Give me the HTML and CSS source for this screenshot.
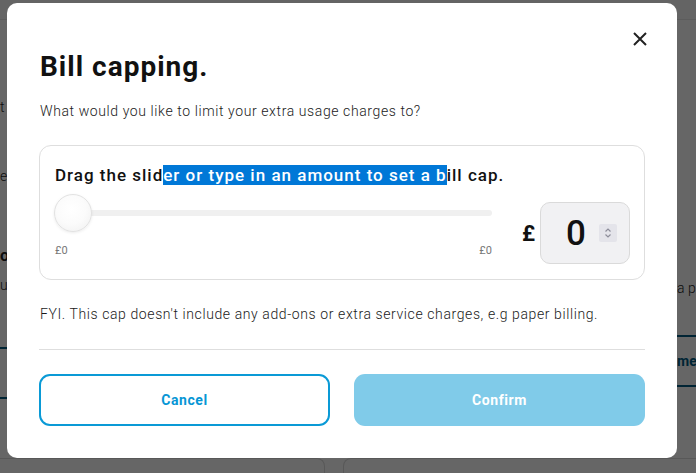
FILE: index.html
```html
<!DOCTYPE html>
<html lang="en">
<head>
<meta charset="utf-8">
<title>Bill capping</title>
<link rel="stylesheet" href="styles.css">
</head>
<body>
<div class="page">
  <div class="page-top"></div>
  <div class="page-row">
    <section class="pcol pcol-left">
      <p class="pline pl1">t</p>
      <p class="pline pl2">e</p>
      <p class="pline pl3 strong">ou</p>
      <p class="pline pl4">u</p>
      <div class="pbtn pbtn-left"></div>
    </section>
    <section class="pcol pcol-right">
      <p class="pline pr1">a p</p>
      <div class="pbtn pbtn-right"><span>me</span></div>
    </section>
  </div>
  <div class="page-row lower">
    <div class="lcard lcard-left"></div>
    <div class="lcard lcard-right"></div>
  </div>
</div>

<div class="overlay">
  <div class="modal" role="dialog" aria-labelledby="bc-title">
    <button class="close" aria-label="Close">
      <svg width="14" height="14" viewBox="0 0 14 14"><path d="M1 1 L13 13 M13 1 L1 13" stroke="#222" stroke-width="2" fill="none"/></svg>
    </button>
    <h1 id="bc-title" class="title">Bill capping.</h1>
    <p class="subtitle">What would you like to limit your extra usage charges to?</p>

    <div class="cap-card">
      <p class="cap-heading">Drag the slid<span class="sel">er or type in an amount to set a b</span>ill cap.</p>
      <div class="cap-row">
        <div class="slider-col">
          <div class="slider">
            <div class="track"></div>
            <div class="thumb"></div>
          </div>
          <div class="slider-labels"><span>£0</span><span>£0</span></div>
        </div>
        <div class="amount">
          <span class="pound">£</span>
          <div class="amount-box">
            <span class="amount-val">0</span>
            <span class="spin">
              <svg width="18" height="18" viewBox="0 0 18 18"><path d="M6.5 7.5 L9 5 L11.5 7.5 M6.5 10.5 L9 13 L11.5 10.5" stroke="#8d8d9a" stroke-width="1.2" fill="none"/></svg>
            </span>
          </div>
        </div>
      </div>
    </div>

    <p class="fyi">FYI. This cap doesn't include any add-ons or extra service charges, e.g paper billing.</p>
    <div class="divider"></div>
    <div class="actions">
      <button class="btn btn-cancel">Cancel</button>
      <button class="btn btn-confirm">Confirm</button>
    </div>
  </div>
</div>
</body>
</html>
```

FILE: styles.css
```css
* { box-sizing: border-box; }
html, body { margin: 0; padding: 0; }
body {
  width: 696px;
  height: 473px;
  overflow: hidden;
  background: #fff;
  font-family: Roboto, "Liberation Sans", sans-serif;
  color: #1a1a1a;
}

/* ---------- backdrop page ---------- */
.page { width: 696px; height: 473px; overflow: hidden; }
.page-top { height: 20px; border-bottom: 1px solid #e6e6e6; background: #fafafa; }
.page-row { display: flex; }
.pcol { position: relative; height: 440px; }
.pcol-left { width: 325px; }
.pcol-right { flex: 1; margin-left: 18px; }
.pline { margin: 0; font-size: 14px; line-height: 20px; color: #222; font-weight: 300; }
.pline.strong { font-weight: 700; font-size: 16px; }
.pl1 { padding-top: 77px; }
.pl2 { padding-top: 49px; }
.pl3 { padding-top: 60px; }
.pl4 { padding-top: 9px; }
.pbtn { border-top: 2px solid #005b83; border-bottom: 2px solid #005b83; height: 52px; }
.pbtn-left { margin-top: 52px; margin-left: -10px; }
.pcol-right .pr1 { padding-top: 258px; padding-left: 334px; }
.pbtn-right { margin-top: 37px; margin-left: 20px; margin-right: -30px; display: flex; align-items: center; padding-left: 314px; }
.pbtn-right span { color: #005b83; font-weight: 700; font-size: 14px; }
.lower { margin-top: -2px; }
.lcard { height: 40px; border: 1px solid #ddd; border-bottom: none; border-radius: 8px 8px 0 0; }
.lcard-left { width: 345px; margin-left: -20px; }
.lcard-right { flex: 1; margin-left: 18px; margin-right: -20px; }

/* ---------- overlay & modal ---------- */
.overlay {
  position: fixed;
  inset: 0;
  background: rgba(0, 0, 0, 0.6);
  display: flex;
  align-items: flex-start;
  padding: 3px 0 0 7px;
}
.modal {
  position: relative;
  width: 670px;
  height: 455px;
  background: #fff;
  border-radius: 10px;
  padding: 47px 32px 32px 32px;
}
.close {
  position: absolute;
  top: 24px;
  right: 25px;
  width: 24px;
  height: 24px;
  padding: 0;
  border: none;
  background: none;
  display: flex;
  align-items: center;
  justify-content: center;
}
.title {
  margin: 0;
  font-size: 28px;
  line-height: 34px;
  font-weight: 700;
  letter-spacing: 1px;
  color: #111;
  padding-left: 1px;
}
.subtitle {
  margin: 17px 0 0;
  font-size: 14px;
  line-height: 20px;
  font-weight: 300;
  letter-spacing: 0.6px;
  color: #1a1a1a;
  padding-left: 1px;
}

.cap-card {
  margin-top: 24px;
  border: 1px solid #dedede;
  border-radius: 12px;
  padding: 17px 14px 15px 15px;
}
.cap-heading {
  margin: 0;
  font-size: 17px;
  line-height: 24px;
  font-weight: 500;
  letter-spacing: 1px;
  color: #111;
}
.sel { background: #0078d7; color: #fff; }
.cap-row { display: flex; margin-top: 7px; }
.slider-col { flex: 1; margin-right: 30px; }
.slider { position: relative; height: 38px; }
.track {
  position: absolute;
  left: 0; right: 0; top: 16px;
  height: 6px;
  border-radius: 3px;
  background: #f0f0f0;
}
.thumb {
  position: absolute;
  left: -1px; top: 0;
  width: 38px; height: 38px;
  border-radius: 50%;
  border: 1px solid #e2e2e2;
  background: radial-gradient(circle at 45% 40%, #ffffff 0%, #fbfbfb 50%, #efefef 100%);
  box-shadow: 0 1px 3px rgba(0,0,0,0.08);
}
.slider-labels {
  display: flex;
  justify-content: space-between;
  margin-top: 12px;
  font-size: 11px;
  line-height: 14px;
  color: #777;
}
.amount { display: flex; align-items: center; margin-top: 8px; height: 62px; }
.pound { font-size: 22px; font-weight: 700; color: #111; margin-right: 5px; }
.amount-box {
  width: 90px;
  height: 62px;
  border: 1px solid #dadada;
  border-radius: 10px;
  background: #f1f1f3;
  display: flex;
  align-items: center;
  padding-left: 25px;
}
.amount-val { font-size: 35px; font-weight: 500; color: #111; line-height: 1; }
.spin {
  margin-left: auto;
  margin-right: 12px;
  width: 18px; height: 18px;
  background: #e4e4ea;
  border-radius: 2px;
  display: flex;
}

.fyi {
  margin: 24px 0 0;
  font-size: 14px;
  line-height: 20px;
  font-weight: 300;
  letter-spacing: 0.6px;
  color: #1a1a1a;
  padding-left: 1px;
}
.divider { margin-top: 25px; height: 1px; background: #dedede; }
.actions { display: flex; justify-content: space-between; margin-top: 24px; }
.btn {
  flex: 0 0 291px;
  width: 291px;
  height: 52px;
  padding: 0;
  border-radius: 11px;
  font-family: Roboto, "Liberation Sans", sans-serif;
  font-size: 14px;
  font-weight: 700;
  letter-spacing: 0.6px;
}
.btn-cancel { background: #fff; border: 2px solid #0a9ad6; color: #0796d5; }
.btn-confirm { background: #80cbe9; border: none; color: #fff; }
```
